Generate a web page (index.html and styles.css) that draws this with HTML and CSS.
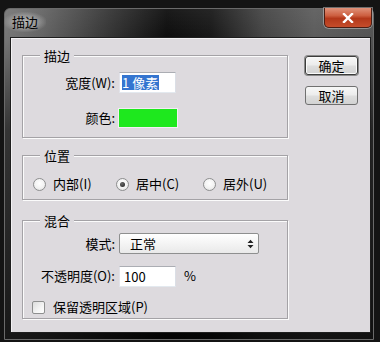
FILE: index.html
```html
<!DOCTYPE html>
<html lang="zh-CN">
<head>
<meta charset="utf-8">
<title>描边</title>
<link rel="stylesheet" href="styles.css">
</head>
<body>
<div class="window">
  <div class="titlebar">
    <span class="title">描边</span>
    <span class="close">
      <svg width="12" height="10" viewBox="0 0 12 10"><path d="M2 1 L10 9 M10 1 L2 9" stroke="#fff" stroke-width="2.4" stroke-linecap="square"/></svg>
    </span>
  </div>
  <div class="client">
    <div class="groups">
      <section class="group g1">
        <div class="legend">描边</div>
        <div class="form f1">
          <span class="lbl">宽度(W):</span>
          <div class="input"><span class="sel">1 像素</span></div>
          <span class="lbl">颜色:</span>
          <div class="swatch"></div>
        </div>
      </section>
      <section class="group g2">
        <div class="legend">位置</div>
        <div class="radios">
          <span class="radio-item"><span class="radio"></span>内部(I)</span>
          <span class="radio-item"><span class="radio on"></span>居中(C)</span>
          <span class="radio-item"><span class="radio"></span>居外(U)</span>
        </div>
      </section>
      <section class="group g3">
        <div class="legend">混合</div>
        <div class="form f3">
          <span class="lbl">模式:</span>
          <div class="select"><span>正常</span>
            <svg width="7" height="10" viewBox="0 0 7 10"><path d="M0.5 4 L3.5 0.8 L6.5 4 Z M0.5 6 L3.5 9.2 L6.5 6 Z" fill="#222"/></svg>
          </div>
          <span class="lbl">不透明度(O):</span>
          <div class="opac"><div class="input num">100</div><span class="pct">%</span></div>
          <div class="check-row"><span class="checkbox"></span>保留透明区域(P)</div>
        </div>
      </section>
    </div>
    <div class="buttons">
      <button class="btn default">确定</button>
      <button class="btn">取消</button>
    </div>
  </div>
</div>
</body>
</html>
```

FILE: styles.css
```css
html, body {
  margin: 0;
}
body {
  width: 380px;
  height: 342px;
  box-sizing: border-box;
  padding-top: 8px;
  background: #141414;
  font-family: "Noto Sans CJK SC", sans-serif;
  font-size: 13px;
  line-height: 16px;
  color: #000;
  overflow: hidden;
}
.window {
  margin-left: 4px;
  width: 370px;
  height: 332px;
  box-sizing: border-box;
  border: 1px solid #6a6a6a;
  border-radius: 6px 6px 0 0;
  padding: 0 2px 6px 5px;
  display: flex;
  flex-direction: column;
  background:
    linear-gradient(to bottom, rgba(255,255,255,0.06), rgba(0,0,0,0) 30px, rgba(0,0,0,0.55) 120px, rgba(0,0,0,0.8)),
    linear-gradient(to right, #767676 0%, #646464 10%, #353535 28%, #0d0d0d 44%, #181818 56%, #444 70%, #5c5c5c 84%, #535353 100%);
}
.titlebar {
  height: 28px;
  display: flex;
  justify-content: space-between;
  align-items: flex-start;
}
.title {
  margin-top: 3px;
  margin-left: -6px;
  padding: 2px 8px;
  color: #000;
  background: radial-gradient(ellipse at center, rgba(205,205,205,0.75) 0%, rgba(190,190,190,0.45) 45%, rgba(180,180,180,0) 75%);
}
.close {
  margin-top: -1px;
  margin-right: -1px;
  width: 48px;
  height: 20px;
  box-sizing: border-box;
  border: 1px solid #4a1e14;
  border-top: none;
  border-radius: 0 0 5px 5px;
  box-shadow: 0 0 0 1px rgba(220,220,220,0.45);
  background: linear-gradient(to bottom, #e0927a 0%, #cd5f40 40%, #b3381a 55%, #c64d2b 100%);
  display: flex;
  align-items: center;
  justify-content: center;
}
.client {
  height: 296px;
  box-sizing: border-box;
  border: 1px solid #1e1e1e;
  background: #dddade;
  box-shadow: inset 1px 1px 0 #f2f1f3;
  display: flex;
  align-items: flex-start;
  padding: 17px 0 0 11px;
}
.groups {
  width: 266px;
  display: flex;
  flex-direction: column;
}
.group {
  border: 1px solid #a4a2a6;
  box-shadow: inset 1px 1px 0 #fbfbfb, 1px 1px 0 #fbfbfb;
}
.legend {
  width: max-content;
  margin: -8px 0 0 17px;
  padding: 0 4px;
  background: #dddade;
}
.form {
  display: grid;
  grid-template-columns: 92px auto;
  column-gap: 4px;
  align-items: center;
}
.lbl {
  text-align: right;
  white-space: nowrap;
}
.f1 {
  padding: 8px 0 9px;
  grid-template-rows: 21px 20px;
  row-gap: 15px;
}
.input {
  width: 57px;
  height: 21px;
  box-sizing: border-box;
  border: 1px solid;
  border-color: #abadb3 #dbdfe6 #e3e9ef #e2e3ea;
  background: #fff;
  padding: 2px 0 0 2px;
  line-height: 15px;
}
.sel {
  display: inline-block;
  background: #3475d0;
  color: #fff;
  padding-right: 1px;
}
.swatch {
  margin-left: -1px;
  width: 60px;
  height: 20px;
  box-sizing: border-box;
  border: 1px solid #f4eef4;
  background: #1ee81e;
}
.g2 {
  margin-top: 17px;
}
.radios {
  display: grid;
  grid-template-columns: 83px 87px auto;
  padding: 12px 0 7px 10px;
  height: 16px;
}
.radio-item {
  display: flex;
  align-items: center;
  white-space: nowrap;
}
.radio {
  width: 13px;
  height: 13px;
  box-sizing: border-box;
  border-radius: 50%;
  border: 1px solid #8d8e8f;
  background: radial-gradient(circle at 50% 40%, #ffffff 0%, #f2f2f2 55%, #d8d8d8 100%);
  margin-right: 7px;
  display: flex;
  align-items: center;
  justify-content: center;
}
.radio.on::after {
  content: "";
  width: 5px;
  height: 5px;
  border-radius: 50%;
  background: radial-gradient(circle at 40% 35%, #6a6a6a, #1c1c1c);
}
.g3 {
  margin-top: 20px;
}
.f3 {
  padding: 4px 0 4px;
  grid-template-rows: 21px 20px 16px;
  row-gap: 12px;
}
.f3 .check-row {
  margin-top: 2px;
}
.select {
  width: 140px;
  height: 21px;
  box-sizing: border-box;
  border: 1px solid #8e8f8f;
  border-radius: 2px;
  background: linear-gradient(to bottom, #ffffff 0%, #f4f4f4 50%, #e9e9e9 100%);
  display: flex;
  align-items: center;
  justify-content: space-between;
  padding: 0 4px 0 10px;
}
.opac {
  display: flex;
  align-items: center;
}
.num {
  padding-left: 4px;
}
.pct {
  margin-left: 8px;
}
.check-row {
  grid-column: 1 / -1;
  display: flex;
  align-items: center;
  padding-left: 9px;
}
.checkbox {
  width: 13px;
  height: 13px;
  box-sizing: border-box;
  border: 1px solid #8e8f8f;
  border-radius: 2px;
  background: linear-gradient(135deg, #dcdcdc 0%, #f4f4f4 60%, #ffffff 100%);
  margin-right: 8px;
}
.buttons {
  margin-left: 17px;
  margin-top: 1px;
  display: flex;
  flex-direction: column;
  gap: 11px;
}
.btn {
  width: 53px;
  height: 19px;
  box-sizing: border-box;
  border: 1px solid #707070;
  border-radius: 3px;
  padding: 0;
  font: inherit;
  line-height: 16px;
  color: #000;
  background: linear-gradient(to bottom, #f7f7f7 0%, #ececec 48%, #dedede 52%, #d2d2d2 100%);
}
.btn.default {
  border-color: #3c3c3c;
  box-shadow: 0 0 0 1px #8a8a8a, inset 0 0 0 1px #fafafa;
}
```
